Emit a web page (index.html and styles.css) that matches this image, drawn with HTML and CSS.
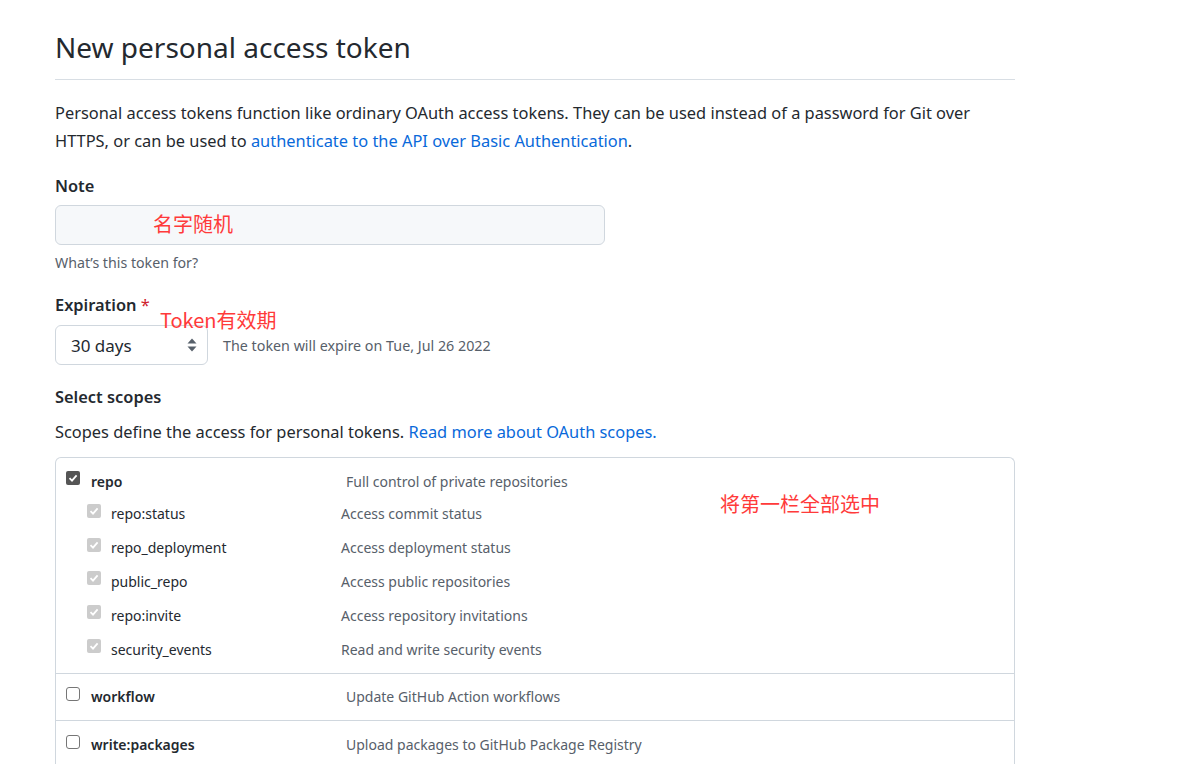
FILE: index.html
```html
<!DOCTYPE html>
<html lang="en">
<head>
<meta charset="utf-8">
<title>New personal access token</title>
<link rel="stylesheet" href="styles.css">
</head>
<body>
<div class="page">
  <h1 class="title">New personal access token</h1>
  <p class="intro">Personal access tokens function like ordinary OAuth access tokens. They can be used instead of a password for Git over HTTPS, or can be used to <a class="link" href="#">authenticate to the API over Basic Authentication</a>.</p>

  <div class="field field-note">
    <label class="label">Note</label>
    <div class="input-wrap">
      <div class="input"></div>
      <span class="note-red note-name">名字随机</span>
    </div>
    <div class="hint">What’s this token for?</div>
  </div>

  <div class="field field-exp">
    <label class="label">Expiration <span class="req">*</span></label>
    <span class="note-red note-exp">Token有效期</span>
    <div class="exp-row">
      <div class="select">
        <span>30 days</span>
        <svg class="sel-arrows" width="10" height="16" viewBox="0 0 10 16"><path d="M5 1.5 L9.5 6.5 H0.5 Z" fill="#57606a"/><path d="M5 14.5 L9.5 9.5 H0.5 Z" fill="#57606a"/></svg>
      </div>
      <span class="exp-note">The token will expire on Tue, Jul 26 2022</span>
    </div>
  </div>

  <div class="field">
    <label class="label">Select scopes</label>
    <p class="scopes-desc">Scopes define the access for personal tokens. <a class="link" href="#">Read more about OAuth scopes.</a></p>
  </div>

  <div class="scopes">
    <span class="note-red note-scope">将第一栏全部选中</span>
    <div class="scope-group group-repo">
      <div class="scope-row top">
        <span class="cb cb-on"><svg width="10" height="10" viewBox="0 0 10 10"><path d="M1.5 5.2 L4 7.6 L8.6 2.4" fill="none" stroke="#fff" stroke-width="1.8"/></svg></span>
        <span class="scope-name">repo</span>
        <span class="scope-text">Full control of private repositories</span>
      </div>
      <div class="sub-list">
        <div class="scope-row sub">
          <span class="cb cb-dis"><svg width="10" height="10" viewBox="0 0 10 10"><path d="M1.5 5.2 L4 7.6 L8.6 2.4" fill="none" stroke="#fff" stroke-width="1.8"/></svg></span>
          <span class="sub-name">repo:status</span>
          <span class="scope-text">Access commit status</span>
        </div>
        <div class="scope-row sub">
          <span class="cb cb-dis"><svg width="10" height="10" viewBox="0 0 10 10"><path d="M1.5 5.2 L4 7.6 L8.6 2.4" fill="none" stroke="#fff" stroke-width="1.8"/></svg></span>
          <span class="sub-name">repo_deployment</span>
          <span class="scope-text">Access deployment status</span>
        </div>
        <div class="scope-row sub">
          <span class="cb cb-dis"><svg width="10" height="10" viewBox="0 0 10 10"><path d="M1.5 5.2 L4 7.6 L8.6 2.4" fill="none" stroke="#fff" stroke-width="1.8"/></svg></span>
          <span class="sub-name">public_repo</span>
          <span class="scope-text">Access public repositories</span>
        </div>
        <div class="scope-row sub">
          <span class="cb cb-dis"><svg width="10" height="10" viewBox="0 0 10 10"><path d="M1.5 5.2 L4 7.6 L8.6 2.4" fill="none" stroke="#fff" stroke-width="1.8"/></svg></span>
          <span class="sub-name">repo:invite</span>
          <span class="scope-text">Access repository invitations</span>
        </div>
        <div class="scope-row sub">
          <span class="cb cb-dis"><svg width="10" height="10" viewBox="0 0 10 10"><path d="M1.5 5.2 L4 7.6 L8.6 2.4" fill="none" stroke="#fff" stroke-width="1.8"/></svg></span>
          <span class="sub-name">security_events</span>
          <span class="scope-text">Read and write security events</span>
        </div>
      </div>
    </div>
    <div class="scope-group">
      <div class="scope-row top">
        <span class="cb cb-off"></span>
        <span class="scope-name">workflow</span>
        <span class="scope-text">Update GitHub Action workflows</span>
      </div>
    </div>
    <div class="scope-group group-last">
      <div class="scope-row top">
        <span class="cb cb-off"></span>
        <span class="scope-name">write:packages</span>
        <span class="scope-text">Upload packages to GitHub Package Registry</span>
      </div>
    </div>
  </div>
</div>
</body>
</html>
```

FILE: styles.css
```css
* { box-sizing: border-box; }
html, body { margin: 0; padding: 0; background: #fff; }
body {
  font-family: "Noto Sans", "Open Sans", "Noto Sans CJK SC", sans-serif;
  color: #24292f;
  font-size: 16.4px;
}
.page {
  width: 960px;
  margin-left: 55px;
  padding-top: 26px;
}
.title {
  margin: 0;
  font-size: 28px;
  font-weight: 400;
  line-height: 42px;
  padding-bottom: 11px;
  border-bottom: 1px solid #d8dee4;
  color: #24292f;
}
.intro {
  margin: 19px 0 0 0;
  font-size: 16.4px;
  line-height: 28px;
}
.link { color: #0969da; text-decoration: none; }
.field { margin-top: 20px; position: relative; }
.field-note { margin-top: 19px; }
.label {
  display: block;
  font-weight: 600;
  font-size: 16.4px;
  line-height: 24px;
}
.req { color: #cf222e; font-weight: 400; }
.input-wrap { position: relative; margin-top: 7px; width: 550px; }
.input {
  height: 40px;
  background: #f6f8fa;
  border: 1px solid #d0d7de;
  border-radius: 6px;
}
.note-red {
  position: absolute;
  color: #ff3a3a;
  font-family: "Noto Sans CJK SC", sans-serif;
  font-size: 20px;
  line-height: 24px;
  white-space: nowrap;
}
.note-name { left: 98px; top: 7px; }
.hint {
  margin-top: 8px;
  font-size: 14.2px;
  line-height: 20px;
  color: #57606a;
}
.field-exp { margin-top: 20px; }
.note-exp { left: 105px; top: 15px; }
.exp-row {
  display: flex;
  align-items: center;
  gap: 15px;
  margin-top: 8px;
}
.select {
  width: 153px;
  height: 40px;
  border: 1px solid #d0d7de;
  border-radius: 6px;
  display: flex;
  align-items: center;
  justify-content: space-between;
  padding: 0 10px 0 15px;
  font-size: 17px;
  background: #fff;
}
.exp-note { font-size: 14.3px; color: #57606a; }
.scopes-desc { margin: 11px 0 0 0; font-size: 16.4px; line-height: 24px; }
.scopes {
  position: relative;
  margin-top: 13px;
  border: 1px solid #d0d7de;
  border-radius: 6px;
  height: 330px;
  border-bottom: none;
  border-bottom-left-radius: 0;
  border-bottom-right-radius: 0;
}
.note-scope { left: 664px; top: 34px; }
.scope-group { border-bottom: 1px solid #d0d7de; padding: 10px 0 10px 10px; }
.group-repo { padding-bottom: 7px; }
.group-last { border-bottom: none; padding-top: 11px; }
.scope-row { display: flex; align-items: center; }
.scope-row.top { height: 26px; }
.cb {
  width: 14px;
  height: 14px;
  border-radius: 2px;
  flex: none;
  display: flex;
  align-items: center;
  justify-content: center;
  margin-top: -6px;
}
.cb-on { background: #555; }
.cb-dis { background: #ccc; }
.cb-off { background: #fff; border: 1px solid #767676; border-radius: 3px; }
.scope-name {
  width: 266px;
  padding-left: 11px;
  font-weight: 600;
  font-size: 14px;
}
.scope-text { font-size: 14px; color: #57606a; }
.sub-list { padding-left: 21px; margin-top: 3px; }
.scope-row.sub { height: 33.8px; }
.sub-name {
  width: 240px;
  padding-left: 10px;
  font-size: 14px;
  color: #24292f;
}
```
